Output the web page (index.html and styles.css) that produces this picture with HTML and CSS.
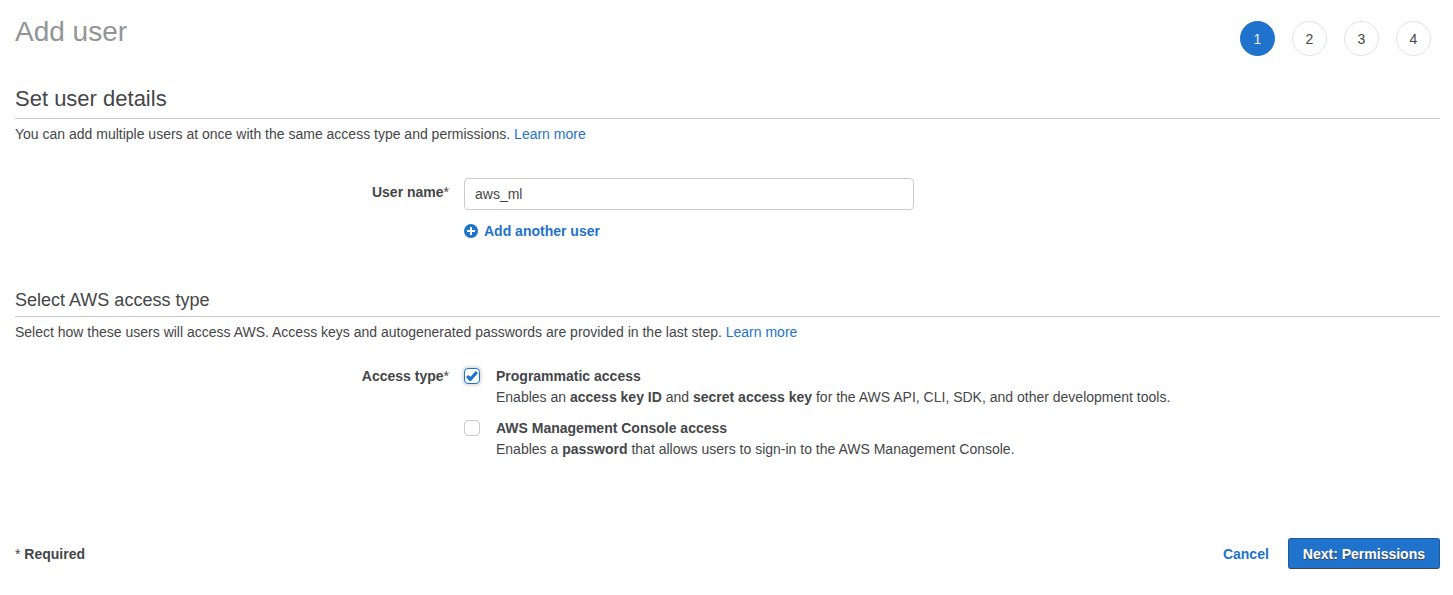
FILE: index.html
```html
<!DOCTYPE html>
<html lang="en">
<head>
<meta charset="utf-8">
<title>Add user</title>
<link rel="stylesheet" href="styles.css">
</head>
<body>
<main class="page">
  <header class="top">
    <h1 class="title">Add user</h1>
    <ol class="steps">
      <li class="step step-current" aria-current="step">1</li>
      <li class="step">2</li>
      <li class="step">3</li>
      <li class="step">4</li>
    </ol>
  </header>
  <form class="form">
    <section class="section details">
      <h2 class="heading heading-large">Set user details</h2>
      <p class="intro">You can add multiple users at once with the same access type and permissions. <a class="link" href="#">Learn more</a></p>
      <div class="field name-field">
        <label class="label" for="user-name">User name<span class="star">*</span></label>
        <div class="control">
          <input class="text-input" id="user-name" type="text" value="aws_ml">
          <button class="add" type="button">
            <svg class="add-icon" viewBox="0 0 14 14" aria-hidden="true"><circle cx="7" cy="7" r="7"/><path d="M7 3v8M3 7h8"/></svg>
            <span>Add another user</span>
          </button>
        </div>
      </div>
    </section>
    <section class="section access">
      <h3 class="heading">Select AWS access type</h3>
      <p class="intro">Select how these users will access AWS. Access keys and autogenerated passwords are provided in the last step. <a class="link" href="#">Learn more</a></p>
      <div class="field access-field" role="group" aria-labelledby="access-label">
        <span class="label" id="access-label">Access type<span class="star">*</span></span>
        <div class="control options">
          <div class="option">
            <input class="check" id="programmatic" type="checkbox" checked>
            <div>
              <label class="option-name" for="programmatic">Programmatic access</label>
              <p class="option-text">Enables an <b>access key ID</b> and <b>secret access key</b> for the AWS API, CLI, SDK, and other development tools.</p>
            </div>
          </div>
          <div class="option">
            <input class="check" id="console" type="checkbox">
            <div>
              <label class="option-name" for="console">AWS Management Console access</label>
              <p class="option-text">Enables a <b>password</b> that allows users to sign-in to the AWS Management Console.</p>
            </div>
          </div>
        </div>
      </div>
    </section>
    <footer class="footer">
      <span class="required"><span class="star">*</span> Required</span>
      <button class="cancel" type="button">Cancel</button>
      <button class="next" type="button">Next: Permissions</button>
    </footer>
  </form>
</main>
</body>
</html>
```
FILE: styles.css
```css
* { box-sizing: border-box; }
body {
  margin: 0;
  background: #fff;
  color: #444649;
  font: 14px/20px "Liberation Sans", Arial, sans-serif;
}
h1, h2, h3, p, ol { margin: 0; padding: 0; }
button, input { font: inherit; }
.page { padding: 16px 13px 24px 15px; }
.top {
  display: flex;
  justify-content: space-between;
  align-items: flex-start;
  padding-bottom: 28px;
}
.title { color: #919596; font-size: 28px; line-height: 32px; font-weight: 400; }
.steps { display: flex; gap: 17px; padding: 5px 9px 0 0; list-style: none; }
.step {
  width: 35px;
  height: 35px;
  border: 1px solid #e3e3e3;
  border-radius: 50%;
  line-height: 35px;
  text-align: center;
}
.step-current { background: #1f73cc; border-color: #1f73cc; color: #eee; }
.heading {
  border-bottom: 1px solid #ccc;
  padding-bottom: 4px;
  font-size: 18px;
  line-height: 24px;
  font-weight: 400;
}
.heading-large { font-size: 22px; line-height: 30px; }
.intro { padding-top: 5px; }
.link { color: #1f73cc; text-decoration: none; }
.field { display: grid; grid-template-columns: 434px minmax(0, 1fr); column-gap: 15px; }
.label { font-weight: 700; text-align: right; }
.star { font-weight: 400; }
.name-field { margin-top: 34px; }
.name-field .label { padding-top: 4px; }
.text-input {
  display: block;
  width: 450px;
  max-width: 100%;
  height: 32px;
  border: 1px solid #ccc;
  border-radius: 4px;
  padding: 0 10px;
  background: #fff;
  color: #444649;
}
.add, .cancel { border: 0; padding: 0; background: none; color: #1f73cc; font-weight: 700; }
.add { display: flex; align-items: center; gap: 6px; margin-top: 11px; }
.add-icon { width: 14px; height: 14px; }
.add-icon circle { fill: #1f73cc; }
.add-icon path { fill: none; stroke: #fff; stroke-width: 2; }
.access { margin-top: 47px; }
.access-field { margin-top: 24px; }
.options { display: grid; gap: 11px; }
.option { display: grid; grid-template-columns: 16px minmax(0, 1fr); column-gap: 16px; }
.option-name { font-weight: 700; }
.option-text { padding-top: 1px; }
.check {
  appearance: none;
  width: 16px;
  height: 16px;
  margin: 2px 0 0;
  border: 1px solid #ccc;
  border-radius: 4px;
  background: #fff;
}
.check:checked {
  display: grid;
  place-items: center;
  border-color: #1f73cc;
  box-shadow: 0 0 3px 2px #e0e3e6;
}
.check:checked::before {
  content: "";
  width: 12px;
  height: 10px;
  background: #1f73cc;
  clip-path: polygon(0 60%, 18% 40%, 38% 58%, 80% 0, 100% 20%, 42% 100%, 30% 100%);
}
.footer { display: flex; align-items: center; margin-top: 79px; }
.required { margin-right: auto; font-weight: 700; }
.next {
  height: 31px;
  margin-left: 19px;
  border: 1px solid #1f5a99;
  border-bottom-color: #444;
  border-radius: 3px;
  padding: 0 14px;
  background: #1f73cc;
  color: #fff;
  font-weight: 700;
  line-height: 16px;
  text-shadow: 0 1px 1px #444;
}
```
